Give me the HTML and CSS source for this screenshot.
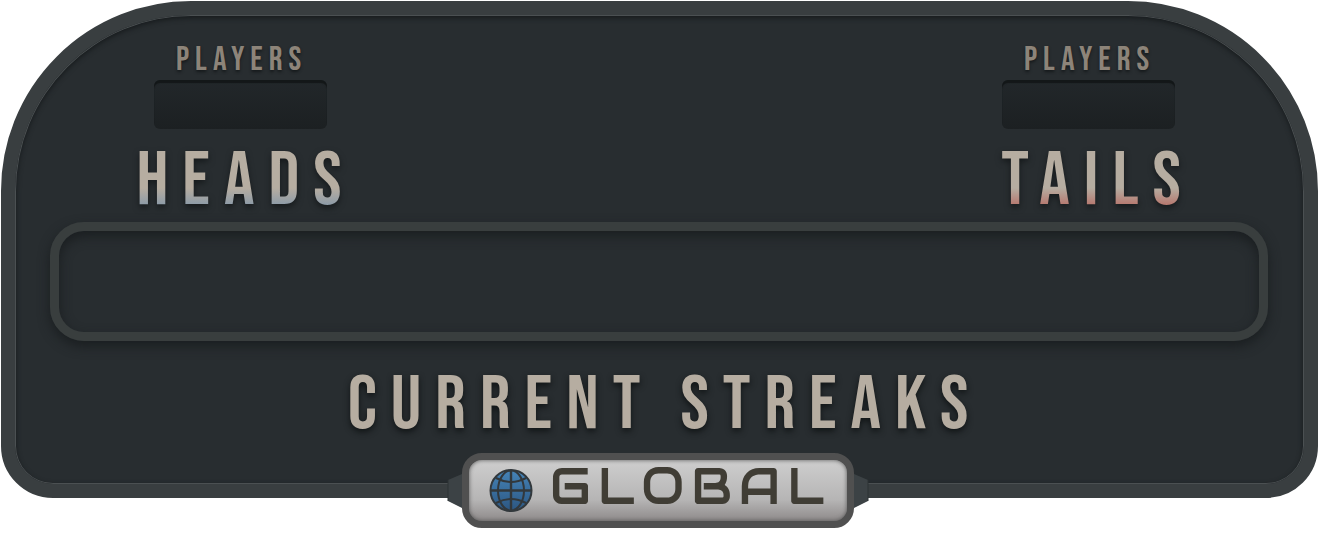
FILE: index.html
```html
<!DOCTYPE html>
<html lang="en">
<head>
<meta charset="utf-8">
<meta name="viewport" content="width=device-width, initial-scale=1">
<title>Current Streaks</title>
<link rel="stylesheet" href="styles.css">
</head>
<body>
<main class="scene">
  <section class="board">
    <div class="sides">
      <div class="side">
        <h3 class="label">PLAYERS</h3>
        <div class="counter"></div>
        <h2 class="name heads">HEADS</h2>
      </div>
      <div class="side">
        <h3 class="label">PLAYERS</h3>
        <div class="counter"></div>
        <h2 class="name tails">TAILS</h2>
      </div>
    </div>
    <div class="track"></div>
    <h1 class="title">CURRENT STREAKS</h1>
  </section>
  <div class="plate">
    <svg class="wing" viewBox="0 0 15 34" aria-hidden="true"><path d="M15 0 1 6V27L15 34Z" fill="#3c4245"/><path d="M1 6V27" stroke="#2c3235" fill="none"/></svg>
    <div class="badge">
      <svg class="globe" viewBox="0 0 44 44" aria-hidden="true">
        <defs><linearGradient id="sea" x2="0" y2="1"><stop stop-color="#4584b8"/><stop offset="1" stop-color="#2c5681"/></linearGradient></defs>
        <g stroke="#32383c" stroke-width="2" fill="none">
          <circle cx="22" cy="21.500" r="20.500" fill="url(#sea)"/>
          <path d="M22 1V42M1.500 21.500H42.500" stroke-width="2.400"/>
          <ellipse cx="22" cy="21.500" rx="13" ry="20"/>
          <path d="M7 9Q22 17 37 9M7 34Q22 26 37 34"/>
        </g>
      </svg>
      <span class="scope">GLOBAL</span>
    </div>
    <svg class="wing" viewBox="0 0 15 34" aria-hidden="true"><path d="M0 0 14 6V27L0 34Z" fill="#3c4245"/><path d="M14 6V27" stroke="#2c3235" fill="none"/></svg>
  </div>
</main>
</body>
</html>
```
FILE: styles.css
```css
* { box-sizing: border-box; }

body {
  margin: 0;
  background: #fff;
  font-family: "Bebas Neue", "Liberation Sans Narrow", "Roboto", sans-serif;
}

h1, h2, h3 { margin: 0; font-weight: 400; }

.scene { padding: 1px; }

.board {
  padding: 28px 36px 40px 35px;
  border: 14px solid #393e40;
  border-radius: 190px 190px 52px 52px;
  background: #282d30;
  box-shadow: inset 0 0 0 1px #4b5052, inset 0 2px 5px 1px #171b1d;
}

.sides {
  display: flex;
  justify-content: space-between;
  padding: 0 76px 0 86px;
}

.side {
  display: flex;
  flex-direction: column;
  align-items: center;
  width: 208px;
}

.label {
  margin-right: -3px;
  color: #8d8479;
  font-size: 34px;
  line-height: 34px;
  letter-spacing: 6px;
  text-shadow: 0 2px 3px #15191b;
}

.counter {
  width: 173px;
  height: 49px;
  margin: 3px 0 15px;
  border-radius: 6px;
  background: linear-gradient(#22272a, #1c2022);
  box-shadow: inset 0 3px 1px #131718;
}

.name {
  margin-right: -12px;
  background: linear-gradient(#b6ada1 58%, #8296a9 86%);
  background-clip: text;
  color: transparent;
  font-size: 76px;
  line-height: 76px;
  letter-spacing: 14px;
  filter: drop-shadow(0 3px 3px #15191b);
}

.tails {
  margin-right: -20px;
  background-image: linear-gradient(#b6ada1 58%, #b66a62 86%);
}

.track {
  height: 119px;
  margin-top: 2px;
  border: 9px solid #393e3e;
  border-radius: 34px;
  box-shadow: 0 5px 12px #1a1e20, inset 0 5px 12px #1a1e20;
}

.title {
  margin: 27px -12px 0 0;
  color: #b6ada1;
  font-size: 76px;
  line-height: 76px;
  letter-spacing: 14px;
  text-align: center;
  text-shadow: 0 3px 6px #101415;
  white-space: nowrap;
}

.plate {
  position: relative;
  display: flex;
  align-items: center;
  justify-content: center;
  margin: -45px 3px 0 0;
}

.wing { width: 15px; height: 34px; }

.badge {
  display: flex;
  align-items: center;
  justify-content: center;
  gap: 17px;
  width: 392px;
  height: 75px;
  border: 7px solid #505050;
  border-radius: 20px;
  background: linear-gradient(#cecece, #b6b5b5 65%, #8e8a8a);
  box-shadow: inset 0 0 4px #555;
}

.globe { flex: none; width: 44px; height: 44px; }

.scope {
  margin-right: -4px;
  padding-bottom: 7px;
  color: #403d35;
  font-family: "Audiowide", "Bruno Ace", "Orbitron", "Inter", sans-serif;
  font-size: 50px;
  font-weight: 400;
  line-height: 48px;
  letter-spacing: 7px;
}
```
